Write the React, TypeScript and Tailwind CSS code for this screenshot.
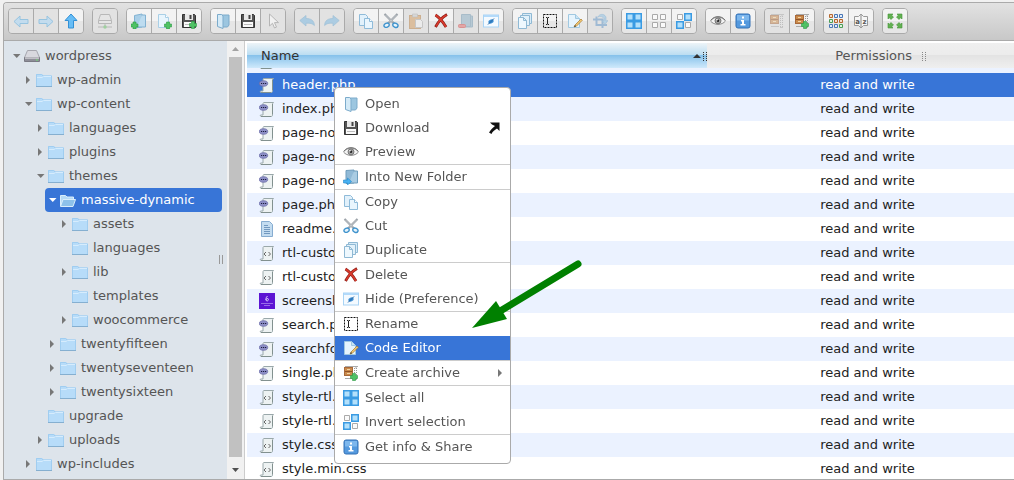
import React, { useEffect, useRef, useState } from 'react';
import { clsx } from 'clsx';

type IconName =
  | 'back' | 'forward' | 'up' | 'netmount' | 'mkdir' | 'mkfile' | 'upload'
  | 'open' | 'save' | 'pointer' | 'undo' | 'redo' | 'copy' | 'cut' | 'paste'
  | 'delete' | 'empty' | 'hide' | 'duplicate' | 'rename' | 'edit' | 'resize'
  | 'selectAll' | 'selectNone' | 'invert' | 'preview' | 'info' | 'extract'
  | 'archive' | 'view' | 'sort' | 'fullscreen' | 'intoFolder'
  | 'drive' | 'folder' | 'folderOpen' | 'php' | 'css' | 'txt' | 'image';

const plus = (x: number, y: number) => (
  <path d={`M${x + 2} ${y}h3v2h2v3h-2v2h-3v-2h-2v-3h2z`} fill="#4fc264" stroke="#2d9b45" strokeWidth=".6" />
);

const curvedArrow = (
  <path d="M.8 7.500 7 2.500v3c5 0 8.200 2 8.400 7-1.800-2-4.200-2.500-8.400-2.300V13z" fill="#78b8e2" stroke="#5b9fcd" strokeWidth=".7" />
);

const archiveBox = (
  <>
    <path d="M2 1.500h13M13 1v2.500M11 14.500h3M2 13.500h8" stroke="#aaa" />
    <rect x="1.500" y="2.500" width="8" height="8" fill="#c98a4b" stroke="#a8693a" />
    <path d="M2 6.500h7" stroke="#8f5228" />
    <path d="M4 4.500h3M4 8.500h3" stroke="#f3d3a5" />
    <path d="M11.500 3v11M13.500 3v11" stroke="#999" strokeDasharray="1 1" />
  </>
);

const scroll = (
  <>
    <path d="M5 1.500h9.500c-1 .6-1 1.500-1 2.500v10c0 1-.5 1.500-1.500 1.500H2.500c-1 0-1.500-.7-1-1.500H4V3c0-.8.300-1.500 1-1.500z" fill="#edf2f2" stroke="#9aa8aa" />
    <path d="M2 15.500h10M13.500 3v10" stroke="#82918f" />
  </>
);

const scissors = (
  <>
    <path d="m1.500 1 9.500 9.500M14.500 1 5 10.500" stroke="#8b9299" strokeWidth="2" />
    <path d="m2 1.500 8 8M14 1.500l-8 8" stroke="#e5e9ec" strokeWidth=".8" />
    <ellipse cx="3.600" cy="12.200" rx="2.700" ry="2" fill="#e6f3fb" stroke="#3f93cd" strokeWidth="1.400" transform="rotate(-25 3.600 12.200)" />
    <ellipse cx="12.400" cy="12.200" rx="2.700" ry="2" fill="#e6f3fb" stroke="#3f93cd" strokeWidth="1.400" transform="rotate(25 12.400 12.200)" />
  </>
);

const floppy = (
  <>
    <path d="M1.500 1.500h12l1 1v12h-13z" fill="#555" stroke="#333" />
    <path d="M4 1h8v6H4z" fill="#e9e9e9" />
    <path d="M8.500 2h2v4h-2z" fill="#444" />
    <path d="M3 9h10v5H3z" fill="#fafafa" />
    <path d="M4 11.500h8" stroke="#bbb" />
  </>
);

const icons: Record<IconName, React.ReactNode> = {
  back: <path d="M1 8.500 7 3v3.500h8v4H7V14z" fill="#a5d8fa" stroke="#4fa8e0" />,
  forward: <path d="M15 8.500 9 3v3.500H1v4h8V14z" fill="#a5d8fa" stroke="#4fa8e0" />,
  up: <path d="M8 1 2 7.500h3.500V15h5V7.500H14z" fill="#67bdf6" stroke="#3390d4" />,
  netmount: (
    <>
      <path d="M3.500 1.500h9l2 6v3h-13v-3z" fill="#e8e8e8" stroke="#909090" />
      <path d="M1.500 7.500h13M1 14h14M8 11v3" stroke="#909090" />
      <circle cx="8" cy="14" r="1.700" fill="#5fbf5f" />
    </>
  ),
  mkdir: (
    <>
      <path d="M3.500 2.500 11 1v13l-7.500 1z" fill="#a9cfe8" stroke="#82b2d2" />
      <path d="M11 2h3.500v12H6" fill="#bddcf0" stroke="#82b2d2" />
      {plus(0, 9)}
    </>
  ),
  mkfile: (
    <>
      <path d="M2.500 1.500h7l3 3v10h-10z" fill="#e8f5fd" stroke="#a9cfe6" />
      <path d="M9.500 1.500v3h3" fill="#fff" stroke="#a9cfe6" />
      {plus(8.500, 9)}
    </>
  ),
  upload: <>{floppy}{plus(8.500, 8.500)}</>,
  open: (
    <>
      <path d="M6 2h8v10l-1.500 2H6z" fill="#9cc6e0" stroke="#7cabcb" />
      <path d="M2.500 1.500h4L8 3v12.500l-5.500-2z" fill="#d4eaf7" stroke="#7cabcb" />
    </>
  ),
  save: floppy,
  pointer: <path d="M4.500 1v12l3-2.700 2 4.700 2-.9-2-4.500h4z" fill="#fff" stroke="#888" />,
  undo: curvedArrow,
  redo: <g transform="matrix(-1 0 0 1 16 0)">{curvedArrow}</g>,
  copy: (
    <>
      <path d="M1.500 1.500h6l2 2v9h-8z" fill="#e2f1fb" stroke="#8fbbd9" />
      <path d="M6.500 5.500h5l3 3v7h-8z" fill="#e9f5fd" stroke="#8fbbd9" />
      <path d="M11.500 5.500v3h3" fill="#fff" stroke="#8fbbd9" />
    </>
  ),
  cut: scissors,
  paste: (
    <>
      <rect x="1.500" y="2.500" width="11" height="13" fill="#d49a5b" stroke="#b57c3f" />
      <path d="M4.500 1h5v3h-5z" fill="#ccc" stroke="#999" strokeWidth=".6" />
      <path d="M7.500 6.500h5l2 2v6h-7z" fill="#f3f3f3" stroke="#aaa" />
    </>
  ),
  delete: (
    <>
      <path d="M2.500 2c4 2.500 7.500 7 10.500 12M14 1.500C9.500 4 5.500 8.500 2.500 14" fill="none" stroke="#8c1f17" strokeWidth="2.800" />
      <path d="M2.500 2c4 2.500 7.500 7 10.500 12M13.500 2C9.500 4 5.500 8.500 3 13.500" fill="none" stroke="#d93a2d" strokeWidth="1.600" />
    </>
  ),
  empty: (
    <>
      <path d="M3.500 1.500h9v12h-9zM12.500 3h2v11h-9" fill="#8eb2c8" stroke="#7098b2" />
      <rect x=".5" y="11.500" width="7" height="3" rx="1" fill="#e46a6a" stroke="#d04545" />
    </>
  ),
  hide: (
    <>
      <rect x=".5" y="2" width="15" height="12" fill="#f4faff" stroke="#a9d4f5" />
      <path d="M1 3h14" stroke="#b3dafa" strokeWidth="2" />
      <ellipse cx="8" cy="8.500" rx="2.800" ry="2" fill="#3a8bd0" transform="rotate(-25 8 8.500)" />
      <path d="m5 11.500 6-6" stroke="#2669a8" />
    </>
  ),
  duplicate: (
    <>
      <path d="M5.500.5h9v10h-9z" fill="#d8ebf7" stroke="#8fb9d4" />
      <path d="M3.500 2.500h9v10h-9z" fill="#e2f1fa" stroke="#8fb9d4" />
      <path d="M1.500 4.500h5l3 3v8h-8zM6.500 4.500v3h3" fill="#eef8fe" stroke="#8fb9d4" />
    </>
  ),
  rename: (
    <>
      <rect x="1.500" y="1.500" width="13" height="13" fill="none" stroke="#111" strokeDasharray="2 1" />
      <path d="M4 4.500h1l.5.500.5-.5h1M5.500 5v6M4 11.500h1l.5-.5.5.5h1" fill="none" stroke="#222" />
    </>
  ),
  edit: (
    <>
      <path d="M1.500 1.500h7l4 4v9h-11z" fill="#e6f4fd" stroke="#a0c8e1" />
      <path d="M8.500 1.500v4h4" fill="#c9e4f5" stroke="#a0c8e1" />
      <path d="m7 14 1-2 6-6 1.300 1.300-6 6z" fill="#f3c874" stroke="#a77a2a" strokeWidth=".7" />
      <path d="m7 14 1-2 1.200 1.200z" fill="#444" />
    </>
  ),
  resize: (
    <>
      <path d="M1 6.500h9.500V15M4.500 3.500V12H15" fill="none" stroke="#5c92c6" strokeWidth="2" />
      <path d="M6 4c1-3 6-4 8 0v4l2-.5-3 4-3-4 2 .5V5.500C11 3.500 8 3 6 4z" fill="#8abfe6" stroke="#5c9bcb" strokeWidth=".6" />
    </>
  ),
  selectAll: (
    <path d="M.75.75h6.500v6.500H.75zM8.750.75h6.500v6.500h-6.500zM.75 8.750h6.500v6.500H.75zM8.750 8.750h6.500v6.500h-6.500z" fill="#b3e0fb" stroke="#3a9be3" strokeWidth="1.500" />
  ),
  selectNone: (
    <path d="M1.500 1.500h5v5h-5zM9.500 1.500h5v5h-5zM1.500 9.500h5v5h-5zM9.500 9.500h5v5h-5z" fill="#fafafa" stroke="#aaa" />
  ),
  invert: (
    <>
      <path d="M1.500 1.500h5v5h-5zM9.500 9.500h5v5h-5z" fill="#fafafa" stroke="#aaa" />
      <path d="M8.750.75h6.500v6.500h-6.500zM.75 8.750h6.500v6.500H.75z" fill="#b3e0fb" stroke="#3a9be3" strokeWidth="1.500" />
    </>
  ),
  preview: (
    <>
      <path d="M.5 8C4 2.800 12 2.800 15.500 8 12 12.500 4 12.500.5 8z" fill="#f4f4f4" stroke="#8a8a8a" />
      <path d="M1 7C4.500 2.500 11.500 2.500 15 7" fill="none" stroke="#777" />
      <circle cx="8" cy="7.800" r="3" fill="#a2a2a2" stroke="#666" strokeWidth=".8" />
      <circle cx="8" cy="7.800" r="1.200" fill="#222" />
      <circle cx="7" cy="6.800" r=".8" fill="#fff" />
    </>
  ),
  info: (
    <>
      <rect x="1" y="1" width="14" height="14" rx="2" fill="#5499de" stroke="#3370b5" />
      <path d="M2 2h12v5.500H2z" fill="#7db7ed" />
      <path d="M7 3.500h2v2H7zM6 7h3v4h1.500v1.500h-5V11H7V8.500H6z" fill="#fff" />
    </>
  ),
  extract: archiveBox,
  archive: <>{archiveBox}{plus(7.500, 8.500)}</>,
  view: (
    <>
      <path d="M1.500 1.500h3v3h-3zM6.500 6.500h3v3h-3z" fill="#f3dccb" stroke="#b5672f" />
      <path d="M6.500 1.500h3v3h-3zM11.500 1.500h3v3h-3zM1.500 11.500h3v3h-3zM6.500 11.500h3v3h-3z" fill="#e3edf9" stroke="#4a77b5" />
      <path d="M1.500 6.500h3v3h-3zM11.500 11.500h3v3h-3z" fill="#def2df" stroke="#4c9c56" />
      <path d="M11.500 6.500h3v3h-3z" fill="#f3dccb" stroke="#b5672f" />
    </>
  ),
  sort: (
    <>
      <path d="M1.500 3.500h4l2-2h1l2 2h4v9h-4l-2 2h-1l-2-2h-4z" fill="#f6f6f6" stroke="#999" />
      <path d="M8 1v14" stroke="#888" />
      <text x="4.600" y="10.500" fontSize="7" fontWeight="700" fill="#555" textAnchor="middle">a</text>
      <text x="11.500" y="10.500" fontSize="7" fontWeight="700" fill="#555" textAnchor="middle">z</text>
    </>
  ),
  fullscreen: (
    <g fill="#62b152" stroke="#47943a" strokeWidth=".6">
      <path d="M1 1h5L4.700 2.300 6.500 4 4 6.500 2.300 4.700 1 6z" />
      <path d="M15 1h-5l1.300 1.300L9.500 4 12 6.500l1.700-1.800L15 6z" />
      <path d="M1 15h5l-1.300-1.300L6.500 12 4 9.500l-1.700 1.800L1 10z" />
      <path d="M15 15h-5l1.300-1.300L9.500 12 12 9.500l1.700 1.800L15 10z" />
    </g>
  ),
  intoFolder: (
    <>
      <path d="M3 1.500 11 1v13l-8 .5z" fill="#90b9d6" stroke="#6f9dbc" />
      <path d="M11 2h3.500v12H6" fill="#a9cce3" stroke="#6f9dbc" />
      <path d="M.5 11h4V9l4 3.500-4 3.500v-2h-4z" fill="#49b2f2" stroke="#2488ca" strokeWidth=".6" />
    </>
  ),
  drive: (
    <>
      <path d="M3.500 2.500h9l3 7h-15z" fill="#d8d8de" stroke="#a6a6ae" />
      <path d="M.5 9.500h15v4H.5z" fill="#8e8e98" stroke="#7a7a84" />
      <path d="M1 10h14" stroke="#f1f1f4" />
      <path d="M12 12h2" stroke="#6fe36f" />
    </>
  ),
  folder: (
    <>
      <path d="M0 2h6l1.500 1.500H16V14H0z" fill="#a9d5f7" />
      <path d="M.5 14V2.500h5L7 4h8.500v10" fill="#b7dcf9" stroke="#a0cdf0" />
      <path d="M1 5.500h5L7.500 4.500H15" fill="none" stroke="#d6ecfd" />
      <path d="M0 14.500h16" stroke="#85afd0" />
    </>
  ),
  folderOpen: (
    <>
      <path d="M.5 14V3.500h5L7 5h6.500v3" fill="#b5daf6" stroke="#d9edfb" />
      <path d="M3 7.500h12.500L13 14.500H.5z" fill="#8dc1ea" stroke="#d9edfb" />
    </>
  ),
  php: (
    <>
      {scroll}
      <ellipse cx="4.500" cy="6.500" rx="4.200" ry="2.800" fill="#8d8fc6" stroke="#6567a5" strokeWidth=".7" />
      <path d="M2 6.500h1.200M4 6.500h1.200M6 6.500h1.200" stroke="#1e1f42" strokeWidth="1.200" />
    </>
  ),
  css: (
    <>
      {scroll}
      <path d="m7 7-2 2 2 2M9.500 7l2 2-2 2" fill="none" stroke="#666" />
    </>
  ),
  txt: (
    <>
      <path d="M2.500.5h8l3 3v12h-11z" fill="#c3dcf0" stroke="#86acd0" />
      <path d="M5 4.500h4M5 6.500h6M5 8.500h6M5 10.500h6M5 12.500h6" stroke="#7198bf" />
    </>
  ),
  image: (
    <>
      <path d="M0 0h16v16H0z" fill="#5c14d4" />
      <path d="M8.500 3C6.500 4.500 6.500 8 8 8s2-2.500.5-2.500S7 7 7 7" fill="none" stroke="#e9dcff" strokeWidth=".9" />
      <path d="M2 10.500h12M5 12.500h6" stroke="#9a6be8" />
    </>
  ),
};

const Icon = ({ name }: { name: IconName }) => (
  <svg viewBox="0 0 16 16" className="size-4 shrink-0" aria-hidden="true">
    {icons[name]}
  </svg>
);

interface ToolButton {
  icon: IconName;
  label: string;
  disabled?: boolean;
}

const toolbar: ToolButton[][] = [
  [
    { icon: 'back', label: 'Back', disabled: true },
    { icon: 'forward', label: 'Forward', disabled: true },
    { icon: 'up', label: 'Up' },
  ],
  [{ icon: 'netmount', label: 'Mount volume', disabled: true }],
  [
    { icon: 'mkdir', label: 'New folder' },
    { icon: 'mkfile', label: 'New file' },
    { icon: 'upload', label: 'Upload' },
  ],
  [
    { icon: 'open', label: 'Open' },
    { icon: 'save', label: 'Download' },
    { icon: 'pointer', label: 'Pointer', disabled: true },
  ],
  [
    { icon: 'undo', label: 'Undo', disabled: true },
    { icon: 'redo', label: 'Redo', disabled: true },
  ],
  [
    { icon: 'copy', label: 'Copy' },
    { icon: 'cut', label: 'Cut' },
    { icon: 'paste', label: 'Paste', disabled: true },
    { icon: 'delete', label: 'Delete' },
    { icon: 'empty', label: 'Empty folder', disabled: true },
    { icon: 'hide', label: 'Hide' },
  ],
  [
    { icon: 'duplicate', label: 'Duplicate' },
    { icon: 'rename', label: 'Rename' },
    { icon: 'edit', label: 'Edit' },
    { icon: 'resize', label: 'Resize', disabled: true },
  ],
  [
    { icon: 'selectAll', label: 'Select all' },
    { icon: 'selectNone', label: 'Select none' },
    { icon: 'invert', label: 'Invert selection' },
  ],
  [
    { icon: 'preview', label: 'Preview' },
    { icon: 'info', label: 'Get info' },
  ],
  [
    { icon: 'extract', label: 'Extract', disabled: true },
    { icon: 'archive', label: 'Create archive' },
  ],
  [
    { icon: 'view', label: 'View' },
    { icon: 'sort', label: 'Sort' },
  ],
  [{ icon: 'fullscreen', label: 'Full screen' }],
];

const Toolbar = () => (
  <div className="flex shrink-0 gap-2 border-b border-[#aaa] bg-linear-to-b from-[#e2e2e2] to-[#c8c8c8] px-1 pt-[5px] pb-[6px]">
    {toolbar.map((group, i) => (
      <div key={i} className="flex shrink-0 divide-x divide-[#aaa] overflow-hidden rounded border border-[#aaa]">
        {group.map((b) => (
          <button
            key={b.label}
            title={b.label}
            aria-label={b.label}
            disabled={b.disabled}
            className={clsx(
              'box-content flex size-6 items-center justify-center',
              b.disabled ? 'bg-[#e2e2e2]' : 'bg-linear-to-b from-[#f3f3f3] from-50% to-[#e6e6e6] to-50% hover:from-white'
            )}
          >
            <span className={clsx(b.disabled && 'opacity-50')}>
              <Icon name={b.icon} />
            </span>
          </button>
        ))}
      </div>
    ))}
  </div>
);

interface TreeNode {
  name: string;
  children?: TreeNode[];
  closed?: boolean;
}

const tree: TreeNode = {
  name: 'wordpress',
  children: [
    { name: 'wp-admin', closed: true },
    {
      name: 'wp-content',
      children: [
        { name: 'languages', closed: true },
        { name: 'plugins', closed: true },
        {
          name: 'themes',
          children: [
            {
              name: 'massive-dynamic',
              children: [
                { name: 'assets', closed: true },
                { name: 'languages' },
                { name: 'lib', closed: true },
                { name: 'templates' },
                { name: 'woocommerce', closed: true },
              ],
            },
            { name: 'twentyfifteen', closed: true },
            { name: 'twentyseventeen', closed: true },
            { name: 'twentysixteen', closed: true },
          ],
        },
        { name: 'upgrade' },
        { name: 'uploads', closed: true },
      ],
    },
    { name: 'wp-includes', closed: true },
  ],
};

const TreeItem = ({ node, root }: { node: TreeNode; root?: boolean }) => {
  const active = node.name === 'massive-dynamic';
  return (
    <li>
      <button
        className={clsx(
          'flex h-6 w-full items-center rounded pl-1 text-left',
          active ? 'bg-[#3875d7] text-white' : 'text-[#555]'
        )}
      >
        <svg viewBox="0 0 8 8" className="mr-[3px] size-2 shrink-0" fill={active ? '#fff' : '#777'} aria-hidden="true">
          {node.children && <path d="M0 2h7.500L3.750 6z" />}
          {node.closed && <path d="M1 0v8l4-4z" />}
        </svg>
        <Icon name={root ? 'drive' : active ? 'folderOpen' : 'folder'} />
        <span className="ml-[5px] whitespace-nowrap">{node.name}</span>
      </button>
      {node.children && (
        <ul className="pl-3">
          {node.children.map((child) => (
            <TreeItem key={child.name} node={child} />
          ))}
        </ul>
      )}
    </li>
  );
};

const Scrollbar = () => (
  <div className="flex w-[17px] shrink-0 flex-col items-center bg-[#f1f1f1]" aria-hidden="true">
    <svg viewBox="0 0 17 16" className="h-4 w-[17px]"><path d="M5 10h7L8.500 6z" fill="#a3a3a3" /></svg>
    <div className="w-[13px] flex-1 bg-[#c1c1c1]" />
    <svg viewBox="0 0 17 22" className="h-[22px] w-[17px]"><path d="M5 11h7l-3.500 4z" fill="#505050" /></svg>
  </div>
);

const files: { name: string; icon: IconName }[] = [
  { name: 'front-page.php', icon: 'php' },
  { name: 'header.php', icon: 'php' },
  { name: 'index.php', icon: 'php' },
  { name: 'page-no-1.php', icon: 'php' },
  { name: 'page-no-2.php', icon: 'php' },
  { name: 'page-no-3.php', icon: 'php' },
  { name: 'page.php', icon: 'php' },
  { name: 'readme.txt', icon: 'txt' },
  { name: 'rtl-custom.css', icon: 'css' },
  { name: 'rtl-custom.min.css', icon: 'css' },
  { name: 'screenshot.png', icon: 'image' },
  { name: 'search.php', icon: 'php' },
  { name: 'searchform.php', icon: 'php' },
  { name: 'single.php', icon: 'php' },
  { name: 'style-rtl.css', icon: 'css' },
  { name: 'style-rtl.min.css', icon: 'css' },
  { name: 'style.css', icon: 'css' },
  { name: 'style.min.css', icon: 'css' },
];

const Grip = ({ color }: { color: string }) => (
  <svg viewBox="0 0 4 10" className="mt-[3px] h-[10px] w-1" stroke={color} strokeDasharray="1 1" aria-hidden="true">
    <path d="M.5 0v10M3.500 0v10" />
  </svg>
);

const FileList = () => {
  const [selected, setSelected] = useState('header.php');
  const listRef = useRef<HTMLDivElement>(null);

  // bring the selected row up under the sticky header
  useEffect(() => {
    if (listRef.current) listRef.current.scrollTop = 19;
  }, []);

  return (
    <div className="flex min-w-0 flex-1 flex-col bg-white pt-0.5 pl-0.5">
      <div ref={listRef} className="min-h-0 flex-1 overflow-auto [scrollbar-width:none]">
        <table className="w-full table-fixed border-collapse">
          <thead className="sticky top-0">
            <tr className="h-[25px]">
              <th className="w-3/5 bg-[linear-gradient(#edf4f8,#b9dcf1_50%,#87c2eb_50%,#cfe9fb)] p-0 text-left font-normal text-[#333]">
                <div className="flex items-center">
                  <span className="flex-1 pl-[14px]">Name</span>
                  <svg viewBox="0 0 8 4" className="mr-0.5 h-1 w-2" fill="#333" aria-hidden="true"><path d="M0 4h8L4 0z" /></svg>
                  <Grip color="#333" />
                </div>
              </th>
              <th className="bg-[linear-gradient(#efefef,#ececec_50%,#e3e3e3_50%,#efefef)] p-0 text-left font-normal text-[#555]">
                <div className="flex items-center gap-2.5 pl-32">
                  <span>Permissions</span>
                  <Grip color="#888" />
                </div>
              </th>
            </tr>
          </thead>
          <tbody>
            {files.map((f) => (
              <tr
                key={f.name}
                onClick={() => setSelected(f.name)}
                className={clsx(
                  'h-6',
                  f.name === selected ? 'bg-[#3875d7] text-white' : 'text-[#222] odd:bg-[#ebf2ff]'
                )}
              >
                <td className="p-0">
                  <div className="flex items-center gap-[7px] pl-3">
                    <Icon name={f.icon} />
                    <span className="whitespace-nowrap">{f.name}</span>
                  </div>
                </td>
                <td className="p-0 pl-[113px] whitespace-nowrap">read and write</td>
              </tr>
            ))}
          </tbody>
        </table>
      </div>
    </div>
  );
};

interface MenuItem {
  label: string;
  icon: IconName;
  extra?: 'shortcut' | 'submenu';
}

const menu: MenuItem[][] = [
  [
    { label: 'Open', icon: 'open' },
    { label: 'Download', icon: 'save', extra: 'shortcut' },
    { label: 'Preview', icon: 'preview' },
  ],
  [{ label: 'Into New Folder', icon: 'intoFolder' }],
  [
    { label: 'Copy', icon: 'copy' },
    { label: 'Cut', icon: 'cut' },
    { label: 'Duplicate', icon: 'duplicate' },
  ],
  [
    { label: 'Delete', icon: 'delete' },
    { label: 'Hide (Preference)', icon: 'hide' },
  ],
  [
    { label: 'Rename', icon: 'rename' },
    { label: 'Code Editor', icon: 'edit' },
  ],
  [{ label: 'Create archive', icon: 'archive', extra: 'submenu' }],
  [
    { label: 'Select all', icon: 'selectAll' },
    { label: 'Invert selection', icon: 'invert' },
  ],
  [{ label: 'Get info & Share', icon: 'info' }],
];

const ContextMenu = () => (
  <div role="menu" className="absolute top-[87px] left-[334px] w-[177px] divide-y divide-[#ccc] rounded border border-[#aaa] bg-white py-1">
    {menu.map((group, i) => (
      <div key={i}>
        {group.map((item) => (
          <button
            key={item.label}
            role="menuitem"
            className={clsx(
              'flex h-6 w-full items-center gap-1.5 pl-2 text-left',
              item.label === 'Code Editor' ? 'bg-[#3875d7] text-white' : 'text-[#555]'
            )}
          >
            <Icon name={item.icon} />
            <span className="flex-1 whitespace-nowrap">{item.label}</span>
            {item.extra === 'shortcut' && (
              <svg viewBox="0 0 12 12" className="mr-2.5 size-3" aria-hidden="true">
                <path d="M2 .5h9.500V9L9 6.500C6.500 8 4.500 9.500 3.500 12L1 10.500C2.500 8 4.500 6 7 4L4 2.500z" fill="#111" />
              </svg>
            )}
            {item.extra === 'submenu' && (
              <svg viewBox="0 0 8 8" className="mr-1.5 size-2" aria-hidden="true">
                <path d="M2 0v8l4-4z" fill="#777" />
              </svg>
            )}
          </button>
        ))}
      </div>
    ))}
  </div>
);

export default function App() {
  return (
    <div className="relative flex h-screen flex-col overflow-hidden bg-[#f1f1f1] pt-0.5 pl-[3px] font-['DejaVu_Sans','Noto_Sans',sans-serif] text-[13px] leading-5">
      <div className="flex min-h-0 flex-1 flex-col overflow-hidden rounded-tl border-y border-l border-[#aaa]">
        <Toolbar />
        <div className="flex min-h-0 flex-1">
          <div className="relative flex w-[241px] shrink-0 border-r border-[#ccc] bg-[#dde4eb]">
            <ul className="min-w-0 flex-1 overflow-hidden px-[5px] pt-[3px]">
              <TreeItem node={tree} root />
            </ul>
            <div className="absolute top-[214px] right-[21px] h-[9px] w-1 border-x border-[#999]" />
            <Scrollbar />
          </div>
          <FileList />
        </div>
      </div>

      <ContextMenu />

      <svg viewBox="0 0 110 70" className="pointer-events-none absolute top-[260px] left-[472px] h-[70px] w-[110px]" fill="#008000" aria-hidden="true">
        <path d="M106 4 25 53" stroke="#008000" strokeWidth="7" strokeLinecap="round" />
        <path d="M0 68 24 41l11 18z" />
      </svg>
    </div>
  );
}
